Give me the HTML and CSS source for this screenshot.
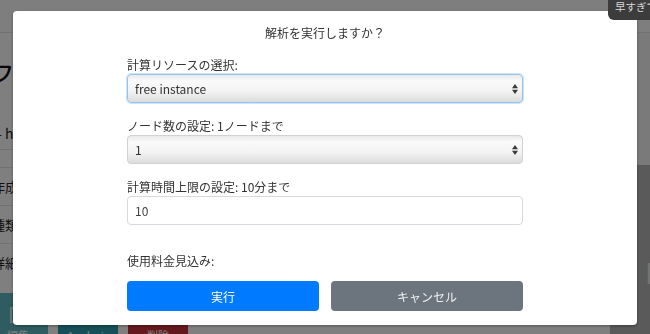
FILE: index.html
```html
<!DOCTYPE html>
<html lang="ja">
<head>
    <meta charset="utf-8">
    <title>解析の実行</title>
    <link rel="stylesheet" href="styles.css">
</head>
<body>
    <div class="page">
        <header class="topbar"></header>
        <div class="layout">
            <main class="main">
                <h1 class="page-title">ファイル詳細</h1>
                <p class="path">- https://files</p>
                <div class="info">
                    <div class="info-row">作成日時</div>
                    <div class="info-row">種類</div>
                    <div class="info-row">詳細</div>
                </div>
                <div class="actions">
                    <a class="tile tile-edit">
                        <svg class="tile-icon" viewBox="0 0 20 20" width="20" height="20">
                            <path d="M12 3H3v14h14V8" fill="none" stroke="#c9eef1" stroke-width="2"/>
                            <path d="M8 12l1-3 7-7 2 2-7 7z" fill="#c9eef1"/>
                        </svg>
                        <span>編集</span>
                    </a>
                    <a class="tile tile-analysis">
                        <svg class="tile-icon" viewBox="0 0 20 20" width="20" height="20">
                            <path d="M3 17V9h3v8zM8.5 17V4h3v13zM14 17v-6h3v6z" fill="#c9eef1"/>
                        </svg>
                        <span>Analysis</span>
                    </a>
                    <a class="tile tile-delete">
                        <svg class="tile-icon" viewBox="0 0 20 20" width="20" height="20">
                            <path d="M4 5h12M8 5V3h4v2M6 5l1 12h6l1-12" fill="none" stroke="#f6d0d3" stroke-width="2"/>
                        </svg>
                        <span>削除</span>
                    </a>
                </div>
            </main>
            <aside class="side">
                <div class="side-top"></div>
                <div class="side-body">
                    <h2 class="side-title">N</h2>
                </div>
            </aside>
        </div>
    </div>

    <div class="backdrop">
        <div class="dialog">
            <h2 class="dialog-title">解析を実行しますか？</h2>
            <form class="run-form">
                <div class="field">
                    <label class="field-label" for="resource">計算リソースの選択:</label>
                    <div class="select-wrap">
                        <select id="resource" class="select select-focused">
                            <option>free instance</option>
                        </select>
                        <svg class="select-arrow" viewBox="0 0 6 10" width="6" height="10">
                            <path d="M0 4.2L3 0l3 4.2zM0 5.8h6L3 10z" fill="#3a3a3a"/>
                        </svg>
                    </div>
                </div>
                <div class="field">
                    <label class="field-label" for="nodes">ノード数の設定: 1ノードまで</label>
                    <div class="select-wrap">
                        <select id="nodes" class="select">
                            <option>1</option>
                        </select>
                        <svg class="select-arrow" viewBox="0 0 6 10" width="6" height="10">
                            <path d="M0 4.2L3 0l3 4.2zM0 5.8h6L3 10z" fill="#3a3a3a"/>
                        </svg>
                    </div>
                </div>
                <div class="field">
                    <label class="field-label" for="limit">計算時間上限の設定: 10分まで</label>
                    <input id="limit" class="text-input" type="text" value="10">
                </div>
                <p class="estimate">使用料金見込み:</p>
                <div class="buttons">
                    <button type="button" class="btn btn-primary">実行</button>
                    <button type="button" class="btn btn-secondary">キャンセル</button>
                </div>
            </form>
        </div>
    </div>

    <div class="toast">早すぎです</div>
</body>
</html>
```

FILE: styles.css
```css
* {
    box-sizing: border-box;
}
html, body {
    margin: 0;
    height: 100%;
    overflow: hidden;
}
body {
    font-family: "Noto Sans CJK JP", "Noto Sans", sans-serif;
    font-size: 12px;
    color: #333;
    background: #fff;
}

/* page behind the dialog */
.page {
    height: 100%;
    display: flex;
    flex-direction: column;
}
.topbar {
    flex: none;
    height: 33px;
    background: #fdfdfd;
    border-bottom: 1px solid #e4e4e4;
}
.layout {
    flex: 1;
    display: flex;
}
.main {
    flex: 1;
    min-width: 0;
}
.page-title {
    margin: 25px 0 0 -8px;
    font-size: 22px;
    line-height: 26px;
    font-weight: 500;
    color: #111;
    white-space: nowrap;
}
.path {
    margin: 40px 0 0 -3px;
    padding: 0 0 7px;
    font-size: 14px;
    line-height: 18px;
    color: #222;
    border-bottom: 1px solid #e4e4e4;
    white-space: nowrap;
}
.info {
    margin: 17px 0 0 -8px;
}
.info-row {
    height: 38px;
    line-height: 37px;
    font-size: 13px;
    color: #222;
    border-top: 1px solid #e4e4e4;
}
.actions {
    display: flex;
    gap: 10px;
    margin: 12px 0 0 -12px;
}
.tile {
    flex: none;
    width: 60px;
    height: 60px;
    display: flex;
    flex-direction: column;
    align-items: center;
    padding-top: 12px;
    color: #fff;
    font-size: 11px;
    line-height: 16px;
    border-radius: 2px;
}
.tile-icon {
    margin-bottom: 2px;
}
.tile-edit {
    background: #5fb9c0;
}
.tile-analysis {
    background: #2c9fae;
}
.tile-delete {
    background: #c8323c;
}
.side {
    flex: none;
    width: 40px;
    display: flex;
    flex-direction: column;
}
.side-top {
    height: 132px;
    background: #f4f4f4;
}
.side-body {
    flex: 1;
    background: #b4b4b4;
}
.side-title {
    margin: 90px 0 0;
    padding-left: 35px;
    font-size: 28px;
    line-height: 34px;
    font-weight: 400;
    color: #e6e6e6;
    white-space: nowrap;
}

/* dialog */
.backdrop {
    position: fixed;
    inset: 0;
    z-index: 10;
    padding: 11px 13px;
    background: rgba(0, 0, 0, 0.5);
}
.dialog {
    height: 314px;
    padding: 13px 0 12px;
    background: #fff;
    border-radius: 4px;
    box-shadow: 0 1px 3px rgba(0, 0, 0, 0.35);
}
.dialog-title {
    margin: 0 0 14px;
    text-align: center;
    font-size: 12px;
    line-height: 18px;
    font-weight: 400;
    color: #333;
}
.run-form {
    width: 396px;
    margin: 0 auto;
}
.field + .field {
    margin-top: 14px;
}
.field-label {
    display: block;
    line-height: 18px;
    color: #333;
}
.select-wrap {
    position: relative;
    height: 29px;
}
.select {
    width: 100%;
    height: 29px;
    padding: 0 24px 0 7px;
    appearance: none;
    -webkit-appearance: none;
    font: inherit;
    font-size: 12px;
    color: #333;
    border: 1px solid #d2d2d2;
    border-radius: 4px;
    background: linear-gradient(to bottom, #e9e9e9 0%, #fafafa 22%, #f3f3f3 60%, #dcdcdc 100%);
}
.select-focused {
    border-color: #92c4f2;
    box-shadow: 0 0 0 1px rgba(146, 196, 242, 0.45);
}
.select-arrow {
    position: absolute;
    right: 5px;
    top: 10px;
}
.text-input {
    display: block;
    width: 100%;
    height: 29px;
    padding: 0 7px;
    font: inherit;
    font-size: 12px;
    color: #444;
    border: 1px solid #d6dadf;
    border-radius: 4px;
    background: #fff;
}
.estimate {
    margin: 27px 0 0;
    line-height: 18px;
    color: #333;
}
.buttons {
    display: grid;
    grid-template-columns: 1fr 1fr;
    gap: 12px;
    margin-top: 11px;
}
.btn {
    height: 30px;
    border: 0;
    border-radius: 4px;
    font: inherit;
    font-size: 12px;
    color: #fff;
}
.btn-primary {
    background: #007bff;
}
.btn-secondary {
    background: #6c757d;
    color: #eef0f2;
}

/* toast in the top right corner */
.toast {
    position: fixed;
    top: -6px;
    left: 608px;
    z-index: 20;
    padding: 6px 8px 6px 7px;
    font-size: 10.5px;
    line-height: 14px;
    color: #d8d8d8;
    background: #3c3c3c;
    border-radius: 6px;
    white-space: nowrap;
}
```
